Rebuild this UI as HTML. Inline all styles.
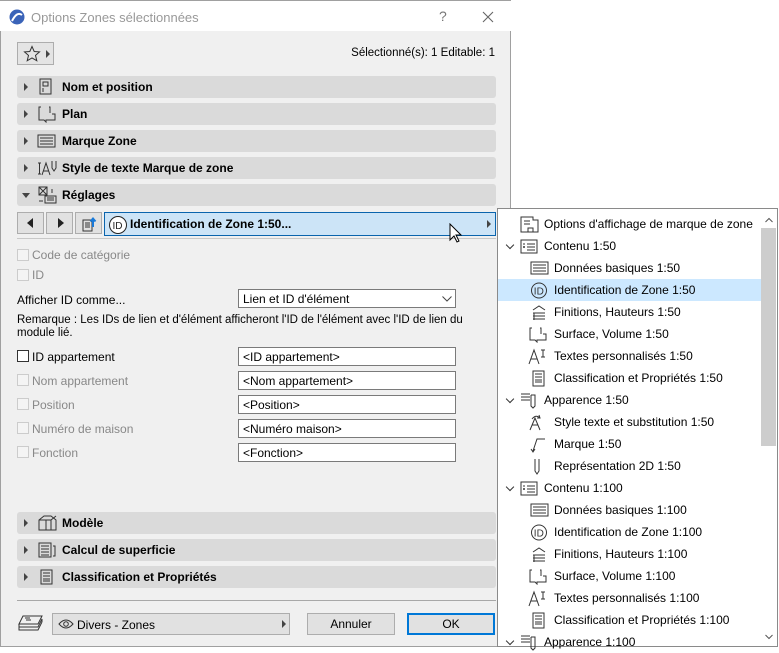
<!DOCTYPE html>
<html><head><meta charset="utf-8"><style>
*{box-sizing:border-box;margin:0;padding:0}
body{width:779px;height:647px;background:#fff;position:relative;overflow:hidden;font-family:"Liberation Sans",sans-serif;font-size:12px;color:#000}
.abs{position:absolute}
#dlg{left:0;top:0;width:511px;height:647px;background:#f0f0f0;border:1px solid #a0a0a0;border-top:none}
#title{left:0;top:0;width:511px;height:31px;background:#fff;border-top:1px solid #a0a0a0}
.bar{position:absolute;left:17px;width:479px;height:22px;background:#dadada;border-radius:3px;font-weight:bold}
.bar .tri{position:absolute;left:7px;top:7px;width:0;height:0;border-left:4px solid #444;border-top:4px solid transparent;border-bottom:4px solid transparent}
.bar .tri.d{left:5px;top:9px;border-top:5px solid #444;border-left:4px solid transparent;border-right:4px solid transparent;border-bottom:none}
.bar svg{position:absolute;left:20px;top:2px}
.bar span{position:absolute;left:45px;top:4px}
.cb{position:absolute;left:17px;width:12px;height:12px;border:1px solid #ccc;background:#f4f4f4}
.lbl{position:absolute;left:32px;color:#888}
.fld{position:absolute;left:238px;width:218px;height:19px;background:#fff;border:1px solid #7a7a7a;padding:2px 4px}
.btn{position:absolute;background:#e1e1e1;border:1px solid #adadad}
#pop{left:497px;top:208px;width:281px;height:439px;background:#fff;border:1px solid #8a8a8a}
.it{position:absolute;left:0;width:263px;height:22px;line-height:22px}
.it svg{position:absolute;top:3px}
.it .t{position:absolute}
.chev{position:absolute;left:9px;top:7px;width:6px;height:6px;border-right:1.3px solid #333;border-bottom:1.3px solid #333;transform:rotate(45deg)}
</style></head><body>
<div id="dlg" class="abs"></div>
<div id="title" class="abs">
 <svg class="abs" style="left:9px;top:8px" width="16" height="16"><circle cx="8" cy="8" r="7.5" fill="#3a63b8"/><path d="M3 12 Q8 2 13 6" stroke="#fff" stroke-width="2" fill="none"/></svg>
 <div class="abs" style="left:31px;top:9px;font-size:13px;color:#999">Options Zones sélectionnées</div>
 <div class="abs" style="left:439px;top:7px;font-size:14px;color:#777">?</div>
 <svg class="abs" style="left:482px;top:10px" width="12" height="12"><path d="M1 1L11 11M11 1L1 11" stroke="#666" stroke-width="1.1"/></svg>
</div>
<div class="btn" style="left:17px;top:42px;width:37px;height:23px;background:#e4e4e4">
 <svg class="abs" style="left:5px;top:2px" width="18" height="18"><path d="M9 1.5l2.2 5 5.3.4-4 3.5 1.3 5.3L9 12.9l-4.8 2.8 1.3-5.3-4-3.5 5.3-.4z" fill="none" stroke="#333" stroke-width="1"/></svg>
 <div class="abs" style="left:28px;top:7px;border-left:4px solid #444;border-top:4px solid transparent;border-bottom:4px solid transparent"></div>
</div>
<div class="abs" style="right:284px;top:47px;font-size:11.5px">Sélectionné(s): 1 Editable: 1</div>

<div class="bar" style="top:76px"><div class="tri"></div><svg width="18" height="18"><rect x="3" y="1" width="11" height="15" fill="none" stroke="#333"/><rect x="6" y="4" width="5" height="4" fill="none" stroke="#333"/><path d="M6 10v4" stroke="#333"/></svg><span>Nom et position</span></div>
<div class="bar" style="top:103px"><div class="tri"></div><svg width="22" height="18"><path d="M4 2H2v13h5l2 2v-2h9V9h-3" fill="none" stroke="#333"/><path d="M12 2h1v6" fill="none" stroke="#333"/></svg><span>Plan</span></div>
<div class="bar" style="top:130px"><div class="tri"></div><svg width="20" height="18"><rect x="1" y="3" width="17" height="12" fill="none" stroke="#333"/><path d="M3 6h13M3 9h13M3 12h13" stroke="#333"/></svg><span>Marque Zone</span></div>
<div class="bar" style="top:157px"><div class="tri"></div><svg width="24" height="18"><path d="M1 4h3M2.5 4v11M1 15h3M5 16l4-12 4 12M6.5 12h5M15 2v7l2 3 2-3V2" fill="none" stroke="#333"/></svg><span>Style de texte Marque de zone</span></div>
<div class="bar" style="top:184px"><div class="tri d"></div><svg width="22" height="18"><rect x="2" y="1" width="8" height="8" fill="none" stroke="#333"/><path d="M2 1l8 8M10 1L2 9" stroke="#333"/><rect x="8" y="10" width="11" height="7" fill="none" stroke="#333"/><path d="M10 12h7M10 14h7M2 15h4M15 3v4" stroke="#333"/></svg><span>Réglages</span></div>

<div class="btn" style="left:17px;top:212px;width:27px;height:22px"><div class="abs" style="left:9px;top:5px;border-right:6px solid #222;border-top:5px solid transparent;border-bottom:5px solid transparent"></div></div>
<div class="btn" style="left:46px;top:212px;width:27px;height:22px"><div class="abs" style="left:11px;top:5px;border-left:6px solid #222;border-top:5px solid transparent;border-bottom:5px solid transparent"></div></div>
<div class="btn" style="left:75px;top:212px;width:27px;height:22px"><svg class="abs" style="left:5px;top:2px" width="18" height="18"><rect x="2" y="5" width="9" height="11" fill="none" stroke="#333"/><path d="M4 8h5M4 10h5M4 12h5" stroke="#333"/><path d="M12 12V4M9.5 6.5L12 3.5l2.5 3" fill="none" stroke="#1a7ad9" stroke-width="2"/></svg></div>
<div class="abs" style="left:104px;top:212px;width:392px;height:24px;background:#cce4f7;border:1px solid #0a64ad">
 <svg class="abs" style="left:3px;top:2px" width="20" height="20"><circle cx="10" cy="10" r="8.5" fill="#fff" stroke="#222"/><text x="4.5" y="14" font-family="Liberation Sans" font-size="10" fill="#222">ID</text></svg>
 <div class="abs" style="left:25px;top:4px;font-weight:bold">Identification de Zone 1:50...</div>
 <div class="abs" style="left:382px;top:7px;border-left:4px solid #444;border-top:4px solid transparent;border-bottom:4px solid transparent"></div>
</div>
<div class="abs" style="left:17px;top:238px;width:479px;height:1px;background:#c8c8c8"></div>

<div class="cb" style="top:249px"></div><div class="lbl" style="top:248px">Code de catégorie</div>
<div class="cb" style="top:269px"></div><div class="lbl" style="top:268px">ID</div>
<div class="abs" style="left:17px;top:293px">Afficher ID comme...</div>
<div class="fld" style="top:289px;height:19px;padding-top:2px">Lien et ID d'élément<svg class="abs" style="left:203px;top:6px" width="10" height="6"><path d="M0.5 0.5l4.5 4.5 4.5-4.5" fill="none" stroke="#444"/></svg></div>
<div class="abs" style="left:17px;top:314px;width:470px;font-size:11.5px;line-height:13px">Remarque : Les IDs de lien et d'élément afficheront l'ID de l'élément avec l'ID de lien du module lié.</div>
<div class="cb" style="top:350px;border-color:#333;background:#fff"></div><div class="lbl" style="top:350px;color:#000">ID appartement</div>
<div class="fld" style="top:347px">&lt;ID appartement&gt;</div>
<div class="cb" style="top:374px"></div><div class="lbl" style="top:374px">Nom appartement</div>
<div class="fld" style="top:371px">&lt;Nom appartement&gt;</div>
<div class="cb" style="top:398px"></div><div class="lbl" style="top:398px">Position</div>
<div class="fld" style="top:395px">&lt;Position&gt;</div>
<div class="cb" style="top:422px"></div><div class="lbl" style="top:422px">Numéro de maison</div>
<div class="fld" style="top:419px">&lt;Numéro maison&gt;</div>
<div class="cb" style="top:446px"></div><div class="lbl" style="top:446px">Fonction</div>
<div class="fld" style="top:443px">&lt;Fonction&gt;</div>

<div class="bar" style="top:512px"><div class="tri"></div><svg width="22" height="18"><path d="M2 6l5-4h7l5 4v10H2zM2 6h12l5-4M9 6v10M14 6v10" fill="none" stroke="#333"/></svg><span>Modèle</span></div>
<div class="bar" style="top:539px"><div class="tri"></div><svg width="22" height="18"><rect x="2" y="2" width="12" height="14" fill="none" stroke="#333"/><path d="M4 5h8M4 8h8M4 11h8M4 14h8M16 5h2v10h-2" fill="none" stroke="#333"/></svg><span>Calcul de superficie</span></div>
<div class="bar" style="top:566px"><div class="tri"></div><svg width="18" height="18"><rect x="4" y="2" width="11" height="14" fill="none" stroke="#333"/><path d="M6 5h7M6 8h7M6 11h7M6 13h7" stroke="#333"/></svg><span>Classification et Propriétés</span></div>

<div class="abs" style="left:17px;top:600px;width:479px;height:1px;background:#a8a8a8"></div>
<svg class="abs" style="left:18px;top:614px" width="26" height="18"><path d="M5 2h19l-4 8H1zM1 10v3h19l4-8v3M1 13v3h19l4-8" fill="none" stroke="#333"/><path d="M7 4h5M8 6h5" stroke="#333"/></svg>
<div class="btn" style="left:52px;top:613px;width:238px;height:22px">
 <svg class="abs" style="left:5px;top:4px" width="16" height="12"><path d="M1 6Q8 -2 15 6Q8 14 1 6z" fill="none" stroke="#333"/><circle cx="8" cy="6" r="2.3" fill="none" stroke="#333"/></svg>
 <div class="abs" style="left:24px;top:4px">Divers - Zones</div>
 <div class="abs" style="left:229px;top:6px;border-left:4px solid #444;border-top:4px solid transparent;border-bottom:4px solid transparent"></div>
</div>
<div class="btn" style="left:307px;top:613px;width:88px;height:22px;text-align:center;line-height:20px">Annuler</div>
<div class="btn" style="left:407px;top:613px;width:88px;height:22px;text-align:center;line-height:18px;border:2px solid #0078d7">OK</div>

<div id="pop" class="abs">
 <div class="abs" style="left:263px;top:19px;width:15px;height:218px;background:#cdcdcd"></div>
 <svg class="abs" style="left:267px;top:8px" width="8" height="6"><path d="M0.5 5L4 1.5 7.5 5" fill="none" stroke="#555"/></svg>
 <svg class="abs" style="left:267px;top:425px" width="8" height="6"><path d="M0.5 1L4 4.5 7.5 1" fill="none" stroke="#555"/></svg>
 <div class="it" style="top:4px"><svg style="left:22px" width="20" height="17"><path d="M1 1h12v3h5v12H1z M8 16v-4h5v4" fill="none" stroke="#333"/><path d="M4 5h6M4 8h6" stroke="#333"/></svg><span class="t" style="left:46px">Options d'affichage de marque de zone</span></div>
 <div class="it" style="top:26px"><div class="chev"></div><svg style="left:22px" width="20" height="17"><rect x="1" y="2" width="16" height="13" fill="none" stroke="#333"/><path d="M3 6h2M3 9h2M4 8v2M7 6h8M7 9h8M7 12h8" stroke="#333"/></svg><span class="t" style="left:46px">Contenu 1:50</span></div>
 <div class="it" style="top:48px"><svg style="left:32px" width="20" height="17"><rect x="1" y="2" width="17" height="12" fill="none" stroke="#333"/><path d="M3 5h13M3 8h13M3 11h13" stroke="#333"/></svg><span class="t" style="left:56px">Données basiques 1:50</span></div>
 <div class="it" style="top:70px;background:#cce8ff;width:263px"><svg style="left:32px" width="20" height="17"><circle cx="9" cy="8.5" r="7.5" fill="none" stroke="#333"/><text x="3.8" y="12.3" font-family="Liberation Sans" font-size="10" fill="#333">ID</text></svg><span class="t" style="left:56px">Identification de Zone 1:50</span></div>
 <div class="it" style="top:92px"><svg style="left:32px" width="20" height="17"><path d="M3 6l6-4 6 4M3 9h12M4 9v7M3 12h12M3 15h12" fill="none" stroke="#333"/></svg><span class="t" style="left:56px">Finitions, Hauteurs 1:50</span></div>
 <div class="it" style="top:114px"><svg style="left:30px" width="22" height="17"><path d="M4 2H2v12h5l2 2v-2h9V8h-3M12 2h1v6" fill="none" stroke="#333"/></svg><span class="t" style="left:56px">Surface, Volume 1:50</span></div>
 <div class="it" style="top:136px"><svg style="left:30px" width="22" height="17"><path d="M1 16l5-14 5 14M3 11h6M13 2h4M15 2v7M13 9h4" fill="none" stroke="#333"/></svg><span class="t" style="left:56px">Textes personnalisés 1:50</span></div>
 <div class="it" style="top:158px"><svg style="left:32px" width="20" height="17"><rect x="3" y="1" width="11" height="15" fill="none" stroke="#333"/><path d="M5 4h7M5 7h7M5 10h7M5 12h7" stroke="#333"/></svg><span class="t" style="left:56px">Classification et Propriétés 1:50</span></div>
 <div class="it" style="top:180px"><div class="chev"></div><svg style="left:22px" width="20" height="17"><path d="M1 2h9M1 5h9M1 8h9M11 3v11l2 2 2-2V3h-4" fill="none" stroke="#333"/></svg><span class="t" style="left:46px">Apparence 1:50</span></div>
 <div class="it" style="top:202px"><svg style="left:30px" width="22" height="17"><path d="M2 16l5-12 5 12M4 11h6M4 5q4-5 8-1M11 1l1 3h-3" fill="none" stroke="#333"/></svg><span class="t" style="left:56px">Style texte et substitution 1:50</span></div>
 <div class="it" style="top:224px"><svg style="left:30px" width="22" height="17"><path d="M5 15L9 3h8M3 13l2 3 2-3" fill="none" stroke="#333"/></svg><span class="t" style="left:56px">Marque 1:50</span></div>
 <div class="it" style="top:246px"><svg style="left:32px" width="20" height="17"><path d="M5 1v12l2 3 2-3V1" fill="none" stroke="#333"/></svg><span class="t" style="left:56px">Représentation 2D 1:50</span></div>
 <div class="it" style="top:268px"><div class="chev"></div><svg style="left:22px" width="20" height="17"><rect x="1" y="2" width="16" height="13" fill="none" stroke="#333"/><path d="M3 6h2M3 9h2M4 8v2M7 6h8M7 9h8M7 12h8" stroke="#333"/></svg><span class="t" style="left:46px">Contenu 1:100</span></div>
 <div class="it" style="top:290px"><svg style="left:32px" width="20" height="17"><rect x="1" y="2" width="17" height="12" fill="none" stroke="#333"/><path d="M3 5h13M3 8h13M3 11h13" stroke="#333"/></svg><span class="t" style="left:56px">Données basiques 1:100</span></div>
 <div class="it" style="top:312px"><svg style="left:32px" width="20" height="17"><circle cx="9" cy="8.5" r="7.5" fill="none" stroke="#333"/><text x="3.8" y="12.3" font-family="Liberation Sans" font-size="10" fill="#333">ID</text></svg><span class="t" style="left:56px">Identification de Zone 1:100</span></div>
 <div class="it" style="top:334px"><svg style="left:32px" width="20" height="17"><path d="M3 6l6-4 6 4M3 9h12M4 9v7M3 12h12M3 15h12" fill="none" stroke="#333"/></svg><span class="t" style="left:56px">Finitions, Hauteurs 1:100</span></div>
 <div class="it" style="top:356px"><svg style="left:30px" width="22" height="17"><path d="M4 2H2v12h5l2 2v-2h9V8h-3M12 2h1v6" fill="none" stroke="#333"/></svg><span class="t" style="left:56px">Surface, Volume 1:100</span></div>
 <div class="it" style="top:378px"><svg style="left:30px" width="22" height="17"><path d="M1 16l5-14 5 14M3 11h6M13 2h4M15 2v7M13 9h4" fill="none" stroke="#333"/></svg><span class="t" style="left:56px">Textes personnalisés 1:100</span></div>
 <div class="it" style="top:400px"><svg style="left:32px" width="20" height="17"><rect x="3" y="1" width="11" height="15" fill="none" stroke="#333"/><path d="M5 4h7M5 7h7M5 10h7M5 12h7" stroke="#333"/></svg><span class="t" style="left:56px">Classification et Propriétés 1:100</span></div>
 <div class="it" style="top:422px"><div class="chev"></div><svg style="left:22px" width="20" height="17"><path d="M1 2h9M1 5h9M1 8h9M11 3v11l2 2 2-2V3h-4" fill="none" stroke="#333"/></svg><span class="t" style="left:46px">Apparence 1:100</span></div>
</div>
<svg class="abs" style="left:449px;top:223px" width="14" height="22"><path d="M1 1v16l4-4 3 6 2-1-3-6h5z" fill="#fff" stroke="#000"/></svg>
</body></html>
